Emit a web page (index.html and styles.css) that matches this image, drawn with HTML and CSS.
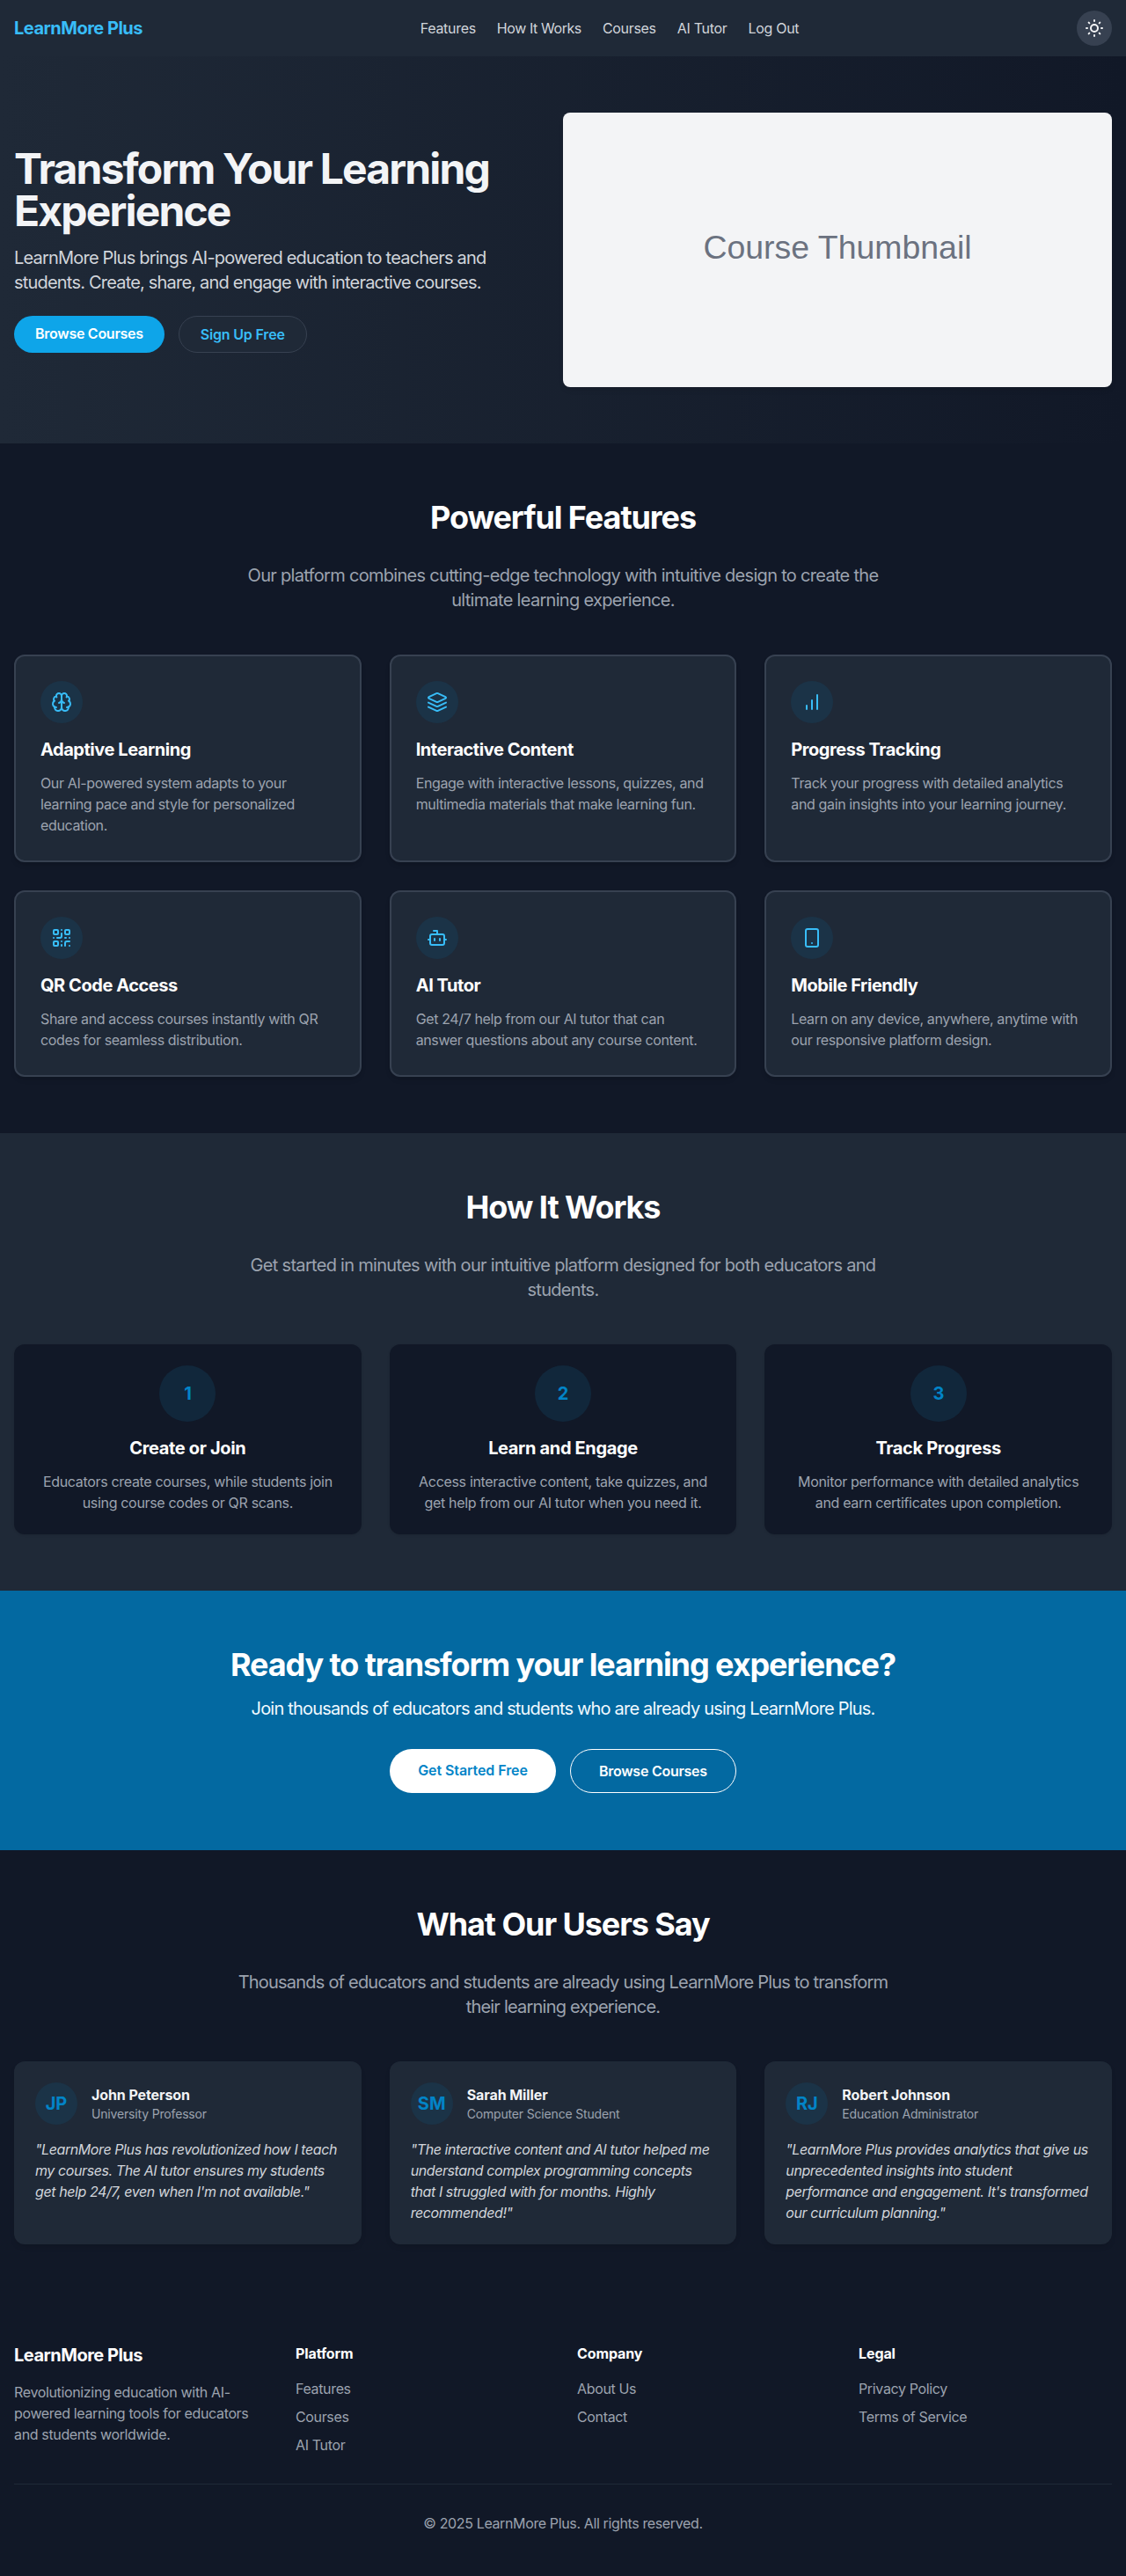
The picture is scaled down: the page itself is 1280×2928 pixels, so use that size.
FILE: index.html
```html
<!DOCTYPE html>
<html lang="en">
<head>
<meta charset="utf-8">
<title>LearnMore Plus</title>
<link rel="stylesheet" href="styles.css">
</head>
<body>
<header class="header">
  <a class="brand" href="#">LearnMore Plus</a>
  <nav class="nav">
    <a href="#">Features</a>
    <a class="tight" href="#">How It Works</a>
    <a href="#">Courses</a>
    <a href="#">AI Tutor</a>
    <a href="#">Log Out</a>
  </nav>
  <button class="theme-toggle" aria-label="Toggle theme">
    <svg class="icon" viewBox="0 0 24 24"><circle cx="12" cy="12" r="4"/><path d="M12 3v1M12 20v1M3 12h1M20 12h1M18.364 5.636l-.707.707M6.343 17.657l-.707.707M5.636 5.636l.707.707M17.657 17.657l.707.707"/></svg>
  </button>
</header>

<section class="hero">
  <div class="hero-copy">
    <h1>Transform Your Learning Experience</h1>
    <p class="lead">LearnMore Plus brings AI-powered education to teachers and students. Create, share, and engage with interactive courses.</p>
    <div class="hero-actions">
      <a class="btn btn-primary" href="#">Browse Courses</a>
      <a class="btn btn-outline" href="#">Sign Up Free</a>
    </div>
  </div>
  <div class="thumbnail">Course Thumbnail</div>
</section>

<section class="section">
  <h2>Powerful Features</h2>
  <p class="section-intro intro-features">Our platform combines cutting-edge technology with intuitive design to create the ultimate learning experience.</p>
  <div class="grid">
    <article class="feature">
      <div class="badge"><svg class="icon" viewBox="0 0 24 24"><path d="M12 5a3 3 0 1 0-5.997.125 4 4 0 0 0-2.526 5.77 4 4 0 0 0 .556 6.588A4 4 0 1 0 12 18Z"/><path d="M12 5a3 3 0 1 1 5.997.125 4 4 0 0 1 2.526 5.77 4 4 0 0 1-.556 6.588A4 4 0 1 1 12 18Z"/><path d="M15 13a4.5 4.5 0 0 1-3-4 4.5 4.5 0 0 1-3 4"/><path d="M17.599 6.5a3 3 0 0 0 .399-1.375M6.003 5.125A3 3 0 0 0 6.401 6.5M3.477 10.896a4 4 0 0 1 .585-.396M19.938 10.5a4 4 0 0 1 .585.396M6 18a4 4 0 0 1-1.967-.516M19.967 17.484A4 4 0 0 1 18 18"/></svg></div>
      <h3>Adaptive Learning</h3>
      <p>Our AI-powered system adapts to your learning pace and style for personalized education.</p>
    </article>
    <article class="feature">
      <div class="badge"><svg class="icon" viewBox="0 0 24 24"><path d="m12.83 2.18a2 2 0 0 0-1.66 0L2.6 6.08a1 1 0 0 0 0 1.83l8.58 3.91a2 2 0 0 0 1.66 0l8.58-3.9a1 1 0 0 0 0-1.83Z"/><path d="m22 17.65-9.17 4.16a2 2 0 0 1-1.66 0L2 17.65"/><path d="m22 12.65-9.17 4.16a2 2 0 0 1-1.66 0L2 12.65"/></svg></div>
      <h3>Interactive Content</h3>
      <p>Engage with interactive lessons, quizzes, and multimedia materials that make learning fun.</p>
    </article>
    <article class="feature">
      <div class="badge"><svg class="icon" viewBox="0 0 24 24"><path d="M12 20V10M18 20V4M6 20v-4"/></svg></div>
      <h3>Progress Tracking</h3>
      <p>Track your progress with detailed analytics and gain insights into your learning journey.</p>
    </article>
    <article class="feature">
      <div class="badge"><svg class="icon" viewBox="0 0 24 24"><rect width="5" height="5" x="3" y="3" rx="1"/><rect width="5" height="5" x="16" y="3" rx="1"/><rect width="5" height="5" x="3" y="16" rx="1"/><path d="M21 16h-3a2 2 0 0 0-2 2v3M21 21v.01M12 7v3a2 2 0 0 1-2 2H7M3 12h.01M12 3h.01M12 16v.01M16 12h1M21 12v.01M12 21v-1"/></svg></div>
      <h3>QR Code Access</h3>
      <p>Share and access courses instantly with QR codes for seamless distribution.</p>
    </article>
    <article class="feature">
      <div class="badge"><svg class="icon" viewBox="0 0 24 24"><path d="M12 8V4H8"/><rect width="16" height="12" x="4" y="8" rx="2"/><path d="M2 14h2M20 14h2M15 13v2M9 13v2"/></svg></div>
      <h3>AI Tutor</h3>
      <p>Get 24/7 help from our AI tutor that can answer questions about any course content.</p>
    </article>
    <article class="feature">
      <div class="badge"><svg class="icon" viewBox="0 0 24 24"><rect width="14" height="20" x="5" y="2" rx="2"/><path d="M12 18h.01"/></svg></div>
      <h3>Mobile Friendly</h3>
      <p>Learn on any device, anywhere, anytime with our responsive platform design.</p>
    </article>
  </div>
</section>

<section class="section section-raised">
  <h2>How It Works</h2>
  <p class="section-intro intro-features">Get started in minutes with our intuitive platform designed for both educators and students.</p>
  <div class="grid">
    <article class="step">
      <div class="step-number">1</div>
      <h3>Create or Join</h3>
      <p>Educators create courses, while students join using course codes or QR scans.</p>
    </article>
    <article class="step">
      <div class="step-number">2</div>
      <h3>Learn and Engage</h3>
      <p>Access interactive content, take quizzes, and get help from our AI tutor when you need it.</p>
    </article>
    <article class="step">
      <div class="step-number">3</div>
      <h3>Track Progress</h3>
      <p>Monitor performance with detailed analytics and earn certificates upon completion.</p>
    </article>
  </div>
</section>

<section class="cta">
  <h2>Ready to transform your learning experience?</h2>
  <p class="cta-text">Join thousands of educators and students who are already using LearnMore Plus.</p>
  <div class="cta-actions">
    <a class="btn btn-large btn-white" href="#">Get Started Free</a>
    <a class="btn btn-large btn-ghost" href="#">Browse Courses</a>
  </div>
</section>

<section class="section">
  <h2>What Our Users Say</h2>
  <p class="section-intro">Thousands of educators and students are already using LearnMore Plus to transform their learning experience.</p>
  <div class="grid">
    <article class="testimonial">
      <div class="person">
        <div class="avatar">JP</div>
        <div><div class="name">John Peterson</div><div class="role">University Professor</div></div>
      </div>
      <p>"LearnMore Plus has revolutionized how I teach my courses. The AI tutor ensures my students get help 24/7, even when I'm not available."</p>
    </article>
    <article class="testimonial">
      <div class="person">
        <div class="avatar">SM</div>
        <div><div class="name">Sarah Miller</div><div class="role">Computer Science Student</div></div>
      </div>
      <p>"The interactive content and AI tutor helped me understand complex programming concepts that I struggled with for months. Highly recommended!"</p>
    </article>
    <article class="testimonial">
      <div class="person">
        <div class="avatar">RJ</div>
        <div><div class="name">Robert Johnson</div><div class="role">Education Administrator</div></div>
      </div>
      <p>"LearnMore Plus provides analytics that give us unprecedented insights into student performance and engagement. It's transformed our curriculum planning."</p>
    </article>
  </div>
</section>

<footer class="footer">
  <div class="footer-grid">
    <div>
      <h3>LearnMore Plus</h3>
      <p class="footer-about">Revolutionizing education with AI-powered learning tools for educators and students worldwide.</p>
    </div>
    <div>
      <h4>Platform</h4>
      <ul><li><a href="#">Features</a></li><li><a href="#">Courses</a></li><li><a href="#">AI Tutor</a></li></ul>
    </div>
    <div>
      <h4>Company</h4>
      <ul><li><a href="#">About Us</a></li><li><a href="#">Contact</a></li></ul>
    </div>
    <div>
      <h4>Legal</h4>
      <ul><li><a href="#">Privacy Policy</a></li><li><a href="#">Terms of Service</a></li></ul>
    </div>
  </div>
  <div class="copyright">© 2025 LearnMore Plus. All rights reserved.</div>
</footer>
</body>
</html>
```
FILE: styles.css
```css
* { box-sizing: border-box; margin: 0; padding: 0; }

body {
  background: #111827;
  color: #f3f4f6;
  font: 400 16px/24px Inter, "Liberation Sans", sans-serif;
  letter-spacing: -0.37px;
}

a { color: inherit; text-decoration: none; }
ul { list-style: none; }

.icon {
  display: block;
  width: 24px;
  height: 24px;
  fill: none;
  stroke: currentColor;
  stroke-width: 2;
  stroke-linecap: round;
  stroke-linejoin: round;
}

/* Header */
.header {
  display: flex;
  align-items: center;
  justify-content: space-between;
  height: 64px;
  padding: 0 16px;
  background: #1f2937;
}
.brand { color: #38bdf8; font-size: 20px; line-height: 28px; font-weight: 700; letter-spacing: -0.5px; }
.nav { display: flex; gap: 24px; color: #d1d5db; letter-spacing: -0.3px; }
.nav .tight { letter-spacing: -0.42px; }
.theme-toggle {
  display: flex;
  align-items: center;
  justify-content: center;
  width: 40px;
  height: 40px;
  border: 0;
  border-radius: 50%;
  background: #374151;
  color: #f3f4f6;
}

/* Hero */
.hero {
  display: grid;
  grid-template-columns: 1fr 1fr;
  align-items: center;
  padding: 64px 16px;
  background: linear-gradient(to right, #1f2937, #111827);
}
.hero-copy { padding-right: 32px; }
h1 { padding-top: 1px; margin-bottom: -1px; font-size: 48px; line-height: 48px; font-weight: 700; letter-spacing: -1.85px; }
.lead { margin: 16px 0 24px; color: #d1d5db; font-size: 20px; line-height: 28px; letter-spacing: -0.8px; }
.hero-actions { display: flex; gap: 16px; }
.thumbnail {
  height: 312px;
  border-radius: 8px;
  background: #f3f4f6;
  color: #6b7280;
  font: 37.44px/306px "Liberation Sans", Arial, sans-serif;
  letter-spacing: 0;
  text-align: center;
  box-shadow: 0 4px 6px -1px rgba(0, 0, 0, .1);
}

/* Buttons */
.btn {
  padding: 8px 24px;
  border-radius: 9999px;
  font-weight: 600;
  letter-spacing: -0.27px;
  white-space: nowrap;
}
.btn-primary { background: #0ea5e9; color: #fff; }
.btn-outline { border: 1px solid #374151; background: #1f2937; color: #38bdf8; letter-spacing: -0.18px; }
.btn-large { padding: 12px 32px; letter-spacing: -0.08px; }
.btn-white { background: #fff; color: #0284c7; }
.btn-ghost { border: 1px solid #fff; color: #fff; letter-spacing: -0.25px; }

/* Sections */
.section { padding: 64px 16px; }
.section-raised { background: #1f2937; }
h2 {
  color: #fff;
  font-size: 36px;
  line-height: 40px;
  font-weight: 700;
  letter-spacing: -1.08px;
  text-align: center;
}
.section-intro {
  max-width: 768px;
  margin: 32px auto 48px;
  color: #9ca3af;
  font-size: 20px;
  line-height: 28px;
  letter-spacing: -0.79px;
  text-align: center;
}
.intro-features { letter-spacing: -0.7px; }
.grid { display: grid; grid-template-columns: repeat(3, 1fr); gap: 32px; }
h3 { color: #fff; font-size: 20px; line-height: 28px; font-weight: 700; letter-spacing: -0.45px; }

.feature {
  padding: 28px;
  border: 2px solid #374151;
  border-radius: 12px;
  background: #1f2937;
  box-shadow: 0 4px 6px -1px rgba(0, 0, 0, .1), 0 2px 4px -2px rgba(0, 0, 0, .1);
}
.badge {
  display: flex;
  align-items: center;
  justify-content: center;
  width: 48px;
  height: 48px;
  margin-bottom: 16px;
  border-radius: 50%;
  background: #1b3347;
  color: #38bdf8;
}
.feature p { margin-top: 12px; color: #9ca3af; }

.step {
  padding: 24px;
  border-radius: 12px;
  background: #111827;
  text-align: center;
  box-shadow: 0 1px 3px rgba(0, 0, 0, .1);
}
.step-number {
  width: 64px;
  margin: 0 auto 16px;
  border-radius: 50%;
  background: #11273b;
  color: #0284c7;
  font-size: 20px;
  line-height: 64px;
  font-weight: 700;
}
.step h3 { letter-spacing: -0.35px; }
.step p { margin-top: 12px; color: #9ca3af; letter-spacing: -0.32px; }

/* Call to action */
.cta { padding: 64px 16px 65px; background: #0369a1; text-align: center; }
.cta h2 { letter-spacing: -1.1px; }
.cta-text { margin: 16px 0 32px; color: #f0f9ff; font-size: 20px; line-height: 28px; letter-spacing: -0.81px; }
.cta-actions { display: flex; justify-content: center; gap: 16px; }

/* Testimonials */
.testimonial {
  padding: 24px;
  border-radius: 12px;
  background: #1f2937;
  box-shadow: 0 4px 6px -1px rgba(0, 0, 0, .1);
}
.person { display: flex; align-items: center; gap: 16px; margin-bottom: 16px; }
.avatar {
  width: 48px;
  border-radius: 50%;
  background: #1b3347;
  color: #0284c7;
  font-size: 20px;
  line-height: 48px;
  font-weight: 700;
  letter-spacing: 0;
  text-align: center;
}
.name { font-weight: 700; letter-spacing: -0.09px; }
.role { color: #9ca3af; font-size: 14px; line-height: 20px; letter-spacing: -0.17px; }
.testimonial p { color: #d1d5db; font-style: italic; letter-spacing: -0.41px; }

/* Footer */
.footer { padding: 48px 16px; color: #9ca3af; }
.footer-grid { display: grid; grid-template-columns: repeat(4, 1fr); gap: 32px; }
.footer h3 { margin-bottom: 16px; letter-spacing: -0.5px; }
.footer h4 { margin-bottom: 16px; color: #fff; font-weight: 700; letter-spacing: -0.1px; }
.footer-about { letter-spacing: -0.35px; }
.footer li + li { margin-top: 8px; }
.footer li { letter-spacing: -0.35px; }
.copyright { margin-top: 32px; padding-top: 32px; border-top: 1px solid #1f2937; text-align: center; }
```
